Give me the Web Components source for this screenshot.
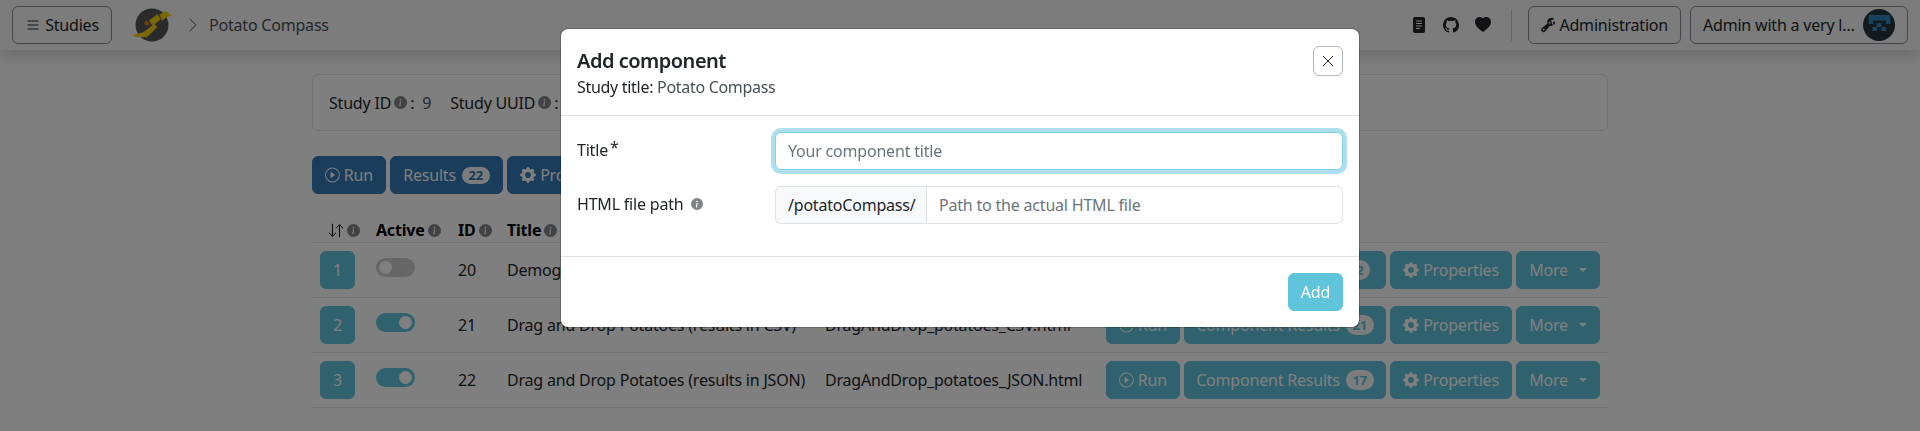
<!DOCTYPE html>
<html lang="en">
<head>
<meta charset="utf-8">
<title>Potato Compass</title>
<style>
  html, body { margin: 0; padding: 0; background: #fff; }
  body { font-family: "Noto Sans", "Open Sans", sans-serif; font-size: 16px; letter-spacing: -0.2px; color: #212529; height: 431px; overflow: hidden; }
</style>
</head>
<body>
<app-navbar></app-navbar>
<study-page></study-page>
<add-component-modal></add-component-modal>

<script>
const ICONS = {
  list: '<path d="M2.5 12a.5.5 0 0 1 .5-.5h10a.5.5 0 0 1 0 1H3a.5.5 0 0 1-.5-.5m0-4a.5.5 0 0 1 .5-.5h10a.5.5 0 0 1 0 1H3a.5.5 0 0 1-.5-.5m0-4a.5.5 0 0 1 .5-.5h10a.5.5 0 0 1 0 1H3a.5.5 0 0 1-.5-.5"/>',
  chevron: '<path d="M4.646 1.646a.5.5 0 0 1 .708 0l6 6a.5.5 0 0 1 0 .708l-6 6a.5.5 0 0 1-.708-.708L10.293 8 4.646 2.354a.5.5 0 0 1 0-.708"/>',
  info: '<path d="M8 16A8 8 0 1 0 8 0a8 8 0 0 0 0 16m.93-9.412-1 4.705c-.07.34.029.533.304.533.194 0 .487-.07.686-.246l-.088.416c-.287.346-.92.598-1.465.598-.703 0-1.002-.422-.808-1.319l.738-3.468c.064-.293.006-.399-.287-.47l-.451-.081.082-.381 2.29-.287zM8 5.5a1 1 0 1 1 0-2 1 1 0 0 1 0 2"/>',
  play: '<path d="M8 15A7 7 0 1 1 8 1a7 7 0 0 1 0 14m0 1A8 8 0 1 0 8 0a8 8 0 0 0 0 16"/><path d="M6.271 5.055a.5.5 0 0 1 .52.038l3.5 2.5a.5.5 0 0 1 0 .814l-3.5 2.5A.5.5 0 0 1 6 10.5v-5a.5.5 0 0 1 .271-.445"/>',
  gear: '<path d="M9.405 1.05c-.413-1.4-2.397-1.4-2.81 0l-.1.34a1.464 1.464 0 0 1-2.105.872l-.31-.17c-1.283-.698-2.686.705-1.987 1.987l.169.311c.446.82.023 1.841-.872 2.105l-.34.1c-1.4.413-1.4 2.397 0 2.81l.34.1a1.464 1.464 0 0 1 .872 2.105l-.17.31c-.698 1.283.705 2.686 1.987 1.987l.311-.169a1.464 1.464 0 0 1 2.105.872l.1.34c.413 1.4 2.397 1.4 2.81 0l.1-.34a1.464 1.464 0 0 1 2.105-.872l.31.17c1.283.698 2.686-.705 1.987-1.987l-.169-.311a1.464 1.464 0 0 1 .872-2.105l.34-.1c1.4-.413 1.4-2.397 0-2.81l-.34-.1a1.464 1.464 0 0 1-.872-2.105l.17-.31c.698-1.283-.705-2.686-1.987-1.987l-.311.169a1.464 1.464 0 0 1-2.105-.872zM8 10.93a2.929 2.929 0 1 1 0-5.86 2.929 2.929 0 0 1 0 5.858z"/>',
  github: '<path d="M8 0C3.58 0 0 3.58 0 8c0 3.54 2.29 6.53 5.47 7.59.4.07.55-.17.55-.38 0-.19-.01-.82-.01-1.49-2.01.37-2.53-.49-2.69-.94-.09-.23-.48-.94-.82-1.13-.28-.15-.68-.52-.01-.53.63-.01 1.08.58 1.23.82.72 1.21 1.87.87 2.33.66.07-.52.28-.87.51-1.07-1.78-.2-3.64-.89-3.64-3.95 0-.87.31-1.59.82-2.15-.08-.2-.36-1.02.08-2.12 0 0 .67-.21 2.2.82.64-.18 1.32-.27 2-.27s1.36.09 2 .27c1.53-1.04 2.2-.82 2.2-.82.44 1.1.16 1.92.08 2.12.51.56.82 1.27.82 2.15 0 3.07-1.87 3.75-3.65 3.95.29.25.54.73.54 1.48 0 1.07-.01 1.93-.01 2.2 0 .21.15.46.55.38A8.01 8.01 0 0 0 16 8c0-4.42-3.58-8-8-8"/>',
  heart: '<path fill-rule="evenodd" d="M8 1.314C12.438-3.248 23.534 4.735 8 15-7.534 4.736 3.562-3.248 8 1.314"/>',
  doc: '<path d="M4 0h8a2 2 0 0 1 2 2v12a2 2 0 0 1-2 2H4a2 2 0 0 1-2-2V2a2 2 0 0 1 2-2m1 3.5v1h6v-1zm0 2.5v1h6V6zm0 2.5v1h6v-1zm0 2.5v1h4v-1z" fill-rule="evenodd"/>',
  wrench: '<path d="M16 4.5a4.5 4.5 0 0 1-1.703 3.526L13 5l2.959-1.11q.04.3.041.61"/><path d="M11.5 9c.653 0 1.273-.139 1.833-.39L12 5.5 11 3l3.826-1.53A4.5 4.5 0 0 0 7.29 6.092l-6.116 5.096a2.583 2.583 0 1 0 3.638 3.638L9.908 8.71A4.5 4.5 0 0 0 11.5 9m-1.292-4.361-.596.893.809-.27a.25.25 0 0 1 .287.377l-.596.893.809-.27.158.475-1.5.5a.25.25 0 0 1-.287-.376l.596-.893-.809.27a.25.25 0 0 1-.287-.377l.596-.893-.809.27-.158-.475 1.5-.5a.25.25 0 0 1 .287.376M3 14a1 1 0 1 1 0-2 1 1 0 0 1 0 2"/>'
}

const icon = (name, size = 16) =>
  `<svg width="${size}" height="${size}" viewBox="0 0 16 16" fill="currentColor" aria-hidden="true">${ICONS[name]}</svg>`

const infoIcon = (size = 13) =>
  `<svg style="color:#808488;flex:none" width="${size}" height="${size}" viewBox="0 0 16 16" fill="currentColor" aria-hidden="true">${ICONS.info}</svg>`

class AppButton extends HTMLElement {
  constructor () {
    super()
    this.shadow = this.attachShadow({ mode: 'open' })
  }

  connectedCallback () {
    const variant = this.getAttribute('variant') || 'outline'
    const colors = {
      outline: 'background:transparent;color:#212529;border-color:#868e96',
      primary: 'background:#337ab7;color:#fff;border-color:#337ab7',
      info: 'background:#5fc4dc;color:#fff;border-color:#5fc4dc'
    }
    this.shadow.innerHTML = /* html */`
    <style>
      :host { display: inline-flex; flex: none; }
      .btn {
        display: inline-flex;
        align-items: center;
        gap: 4px;
        box-sizing: border-box;
        height: 38px;
        width: 100%;
        padding: 0 12px;
        border: 1px solid;
        border-radius: 6px;
        font-size: 16px;
        white-space: nowrap;
        justify-content: center;
        ${colors[variant]}
      }
    </style>
    <div class="btn"><slot></slot></div>
    `
  }
}

class CountBadge extends HTMLElement {
  constructor () {
    super()
    this.attachShadow({ mode: 'open' }).innerHTML = /* html */`
    <style>
      :host {
        display: inline-block;
        margin-left: 2px;
        padding: 1px 6.5px;
        border-radius: 10px;
        background: #f8f9fa;
        color: #337ab7;
        font-size: 13px;
        font-weight: 700;
        line-height: 15px;
        letter-spacing: 0;
      }
      :host([tone="info"]) { color: #5fc4dc; padding: 2px 6.5px; line-height: 16px; }
    </style>
    <slot></slot>
    `
  }
}

class AppNavbar extends HTMLElement {
  constructor () {
    super()
    this.shadow = this.attachShadow({ mode: 'open' })
  }

  connectedCallback () {
    this.shadow.innerHTML = /* html */`
    <style>
      :host {
        display: flex;
        align-items: center;
        box-sizing: border-box;
        height: 50px;
        padding: 0 12px;
        background: #f8f9fa;
        box-shadow: 0 8px 16px rgba(0, 0, 0, .15);
        position: relative;
      }
      .logo { margin-left: 20px; flex: none; }
      .sep { margin: 0 8px 0 12px; color: #6c757d; display: flex; }
      .crumb { color: #495057; }
      .right { margin-left: auto; display: flex; align-items: center; }
      .links { display: flex; gap: 16px; color: #212529; }
      .divider { width: 1px; height: 32px; background: #c9ccd0; margin: 0 16px 0 20px; }
      app-button + app-button { margin-left: 9px; }
      .user { display: flex; align-items: center; width: 192px; gap: 7px; }
      .name { width: 153px; white-space: nowrap; }
      .avatar { flex: none; }
    </style>
    <app-button style="width:100px">${icon('list')}<span>Studies</span></app-button>
    <svg class="logo" width="41" height="36" viewBox="0 0 41 36" aria-hidden="true">
      <circle cx="20" cy="18" r="16.5" fill="#555"/>
      <path d="M1.3 27.7l10-2.4 11-8.3 3 3.3-10.6 10-12.4-.6z" fill="#f5d010"/>
      <path d="M17 13.7l8.3-6.7 3.4 5.3-8 6.7z" fill="#f5d010"/>
      <path d="M27.3 7.7l6.4-3.7 6.6 4.7-5.6 1.6-4.7 3.4z" fill="#f5d010"/>
      <circle cx="14.7" cy="16.3" r="2.2" fill="#e87b17"/>
    </svg>
    <span class="sep">${icon('chevron')}</span>
    <span class="crumb">Potato Compass</span>
    <div class="right">
      <div class="links">${icon('doc')}${icon('github')}${icon('heart')}</div>
      <div class="divider"></div>
      <app-button style="width:153px">${icon('wrench')}<span>Administration</span></app-button>
      <app-button style="width:218px">
        <span class="user">
          <span class="name">Admin with a very l…</span>
          <svg class="avatar" width="32" height="32" viewBox="0 0 32 32" aria-hidden="true">
            <circle cx="16" cy="16" r="16" fill="#243440"/>
            <path d="M5.7 6h21.7v9h-4.4v-3.5H10V15H5.7z M13.4 14h5v4h-5z M9.4 18H14v4H9.4z M18.4 18H23v4h-4.6z" fill="#2f86bd"/>
          </svg>
        </span>
      </app-button>
    </div>
    `
  }
}

class ToggleSwitch extends HTMLElement {
  constructor () {
    super()
    this.attachShadow({ mode: 'open' }).innerHTML = /* html */`
    <style>
      :host {
        display: block;
        position: relative;
        box-sizing: border-box;
        width: 39px;
        height: 19px;
        border-radius: 10px;
        background: #cccccc;
      }
      :host([on]) { background: #5fc4dc; }
      .knob {
        position: absolute;
        top: 3px;
        left: 3px;
        width: 13px;
        height: 13px;
        border-radius: 50%;
        background: #fff;
      }
      :host([on]) .knob { left: 23px; }
    </style>
    <div class="knob"></div>
    `
  }
}

const TABLE_COLUMNS = '56px 82px 49px 318px 281px 1fr'

class ComponentRow extends HTMLElement {
  constructor () {
    super()
    this.shadow = this.attachShadow({ mode: 'open' })
  }

  connectedCallback () {
    const pos = this.getAttribute('pos')
    const id = this.getAttribute('component-id')
    const name = this.getAttribute('name')
    const file = this.getAttribute('file')
    const results = this.getAttribute('results')
    const on = this.hasAttribute('active') ? 'on' : ''
    this.shadow.innerHTML = /* html */`
    <style>
      :host {
        display: grid;
        grid-template-columns: ${TABLE_COLUMNS};
        box-sizing: border-box;
        height: 55px;
        align-items: center;
        border-bottom: 1px solid #dee2e6;
      }
      .cell { padding: 0 8px; white-space: nowrap; }
      .toggle { align-self: start; padding-top: 15px; }
      .actions { display: flex; gap: 4px; }
      .caret {
        width: 0;
        height: 0;
        margin-left: 7px;
        border-top: 4px solid currentColor;
        border-left: 4px solid transparent;
        border-right: 4px solid transparent;
      }
    </style>
    <div class="cell"><app-button variant="info" style="width:35px">${pos}</app-button></div>
    <div class="cell toggle"><toggle-switch ${on}></toggle-switch></div>
    <div class="cell">${id}</div>
    <div class="cell">${name}</div>
    <div class="cell">${file}</div>
    <div class="cell actions">
      <app-button variant="info" style="width:74px">${icon('play')}<span>Run</span></app-button>
      <app-button variant="info" style="width:202px"><span>Component Results</span><count-badge tone="info">${results}</count-badge></app-button>
      <app-button variant="info" style="width:122px">${icon('gear')}<span>Properties</span></app-button>
      <app-button variant="info" style="width:84px"><span>More</span><span class="caret"></span></app-button>
    </div>
    `
  }
}

class StudyPage extends HTMLElement {
  constructor () {
    super()
    this.shadow = this.attachShadow({ mode: 'open' })
  }

  connectedCallback () {
    this.shadow.innerHTML = /* html */`
    <style>
      :host { display: block; width: 1296px; margin: 24px auto 0; }
      .card {
        display: flex;
        align-items: center;
        gap: 19px;
        box-sizing: border-box;
        height: 57px;
        padding: 0 16px;
        border: 1px solid #dee2e6;
        border-radius: 6px;
      }
      .field { display: flex; align-items: center; gap: 3px; }
      .value { margin-left: 5px; color: #495057; }
      .toolbar { display: flex; gap: 4px; margin-top: 25px; }
      .head {
        display: grid;
        grid-template-columns: ${TABLE_COLUMNS};
        align-items: center;
        box-sizing: border-box;
        height: 49px;
        padding-top: 24px;
        border-bottom: 1px solid #dee2e6;
        font-weight: 700;
        color: #000;
      }
      .th { display: flex; align-items: center; gap: 3px; padding: 0 8px; }
      .th.sort { padding-left: 16px; }
    </style>
    <div class="card">
      <div class="field">Study ID ${infoIcon()}: <span class="value">9</span></div>
      <div class="field">Study UUID ${infoIcon()}:</div>
    </div>
    <div class="toolbar">
      <app-button variant="primary" style="width:74px">${icon('play')}<span>Run</span></app-button>
      <app-button variant="primary" style="width:113px"><span>Results</span><count-badge>22</count-badge></app-button>
      <app-button variant="primary" style="width:122px">${icon('gear')}<span>Properties</span></app-button>
    </div>
    <div class="head">
      <div class="th sort">
        <svg width="18" height="15" viewBox="0 0 18 15" fill="none" stroke="#000" stroke-width="1.1" aria-hidden="true">
          <path d="M5 0v14M1 10l4 4 4-4M13 15V1M9 5l4-4 4 4"/>
        </svg>
        ${infoIcon()}
      </div>
      <div class="th">Active ${infoIcon()}</div>
      <div class="th">ID ${infoIcon()}</div>
      <div class="th">Title ${infoIcon()}</div>
      <div class="th">HTML file</div>
      <div class="th"></div>
    </div>
    <component-row pos="1" component-id="20" name="Demographics" file="Demographics.html" results="2"></component-row>
    <component-row pos="2" component-id="21" active name="Drag and Drop Potatoes (results in CSV)" file="DragAndDrop_potatoes_CSV.html" results="21"></component-row>
    <component-row pos="3" component-id="22" active name="Drag and Drop Potatoes (results in JSON)" file="DragAndDrop_potatoes_JSON.html" results="17"></component-row>
    `
  }
}

class AddComponentModal extends HTMLElement {
  constructor () {
    super()
    this.shadow = this.attachShadow({ mode: 'open' })
  }

  connectedCallback () {
    this.shadow.innerHTML = /* html */`
    <style>
      :host {
        position: fixed;
        inset: 0;
        display: flex;
        justify-content: center;
        align-items: flex-start;
        background: rgba(0, 0, 0, .5);
      }
      .dialog {
        box-sizing: border-box;
        width: 800px;
        margin-top: 28px;
        background: #fff;
        border: 1px solid rgba(0, 0, 0, .2);
        border-radius: 8px;
        background-clip: padding-box;
      }
      header {
        display: flex;
        justify-content: space-between;
        align-items: flex-start;
        box-sizing: border-box;
        height: 87px;
        padding: 17px 16px 16px;
        border-bottom: 1px solid #dee2e6;
      }
      h5 { margin: 0; font-size: 20px; font-weight: 600; letter-spacing: -0.5px; line-height: 29px; color: #212529; }
      .subtitle { line-height: 24px; color: #495057; letter-spacing: -0.3px; }
      .subtitle b { font-weight: 400; color: #212529; }
      .close {
        display: flex;
        align-items: center;
        justify-content: center;
        box-sizing: border-box;
        width: 30px;
        height: 30px;
        border: 1px solid #adb5bd;
        border-radius: 6px;
      }
      .body { padding: 16px 16px 32px; display: flex; flex-direction: column; gap: 16px; border-bottom: 1px solid #dee2e6; }
      .row { display: grid; grid-template-columns: 198px 568px; align-items: center; height: 38px; }
      .label { display: flex; align-items: center; gap: 8px; margin-top: -2px; }
      sup { font-size: 16px; line-height: 0; position: relative; top: -3px; margin-left: -6px; }
      input {
        box-sizing: border-box;
        width: 100%;
        height: 38px;
        padding: 0 12px;
        font: inherit;
        letter-spacing: inherit;
        border: 1px solid #dee2e6;
        border-radius: 6px;
        outline: none;
        color: #212529;
        background: #fff;
      }
      input::placeholder { color: #6c757d; opacity: 1; }
      input.focus { border-color: #85cfe8; box-shadow: 0 0 0 4px rgba(91, 192, 222, .5); }
      .group { display: flex; }
      .prefix {
        display: flex;
        align-items: center;
        flex: none;
        box-sizing: border-box;
        width: 151px;
        height: 38px;
        padding: 0 12px;
        background: #f8f9fa;
        border: 1px solid #dee2e6;
        border-right: 0;
        border-radius: 6px 0 0 6px;
      }
      .group input { border-radius: 0 6px 6px 0; }
      footer { display: flex; justify-content: flex-end; padding: 16px; }
    </style>
    <div class="dialog" role="dialog" aria-label="Add component">
      <header>
        <div>
          <h5>Add component</h5>
          <div class="subtitle"><b>Study title:</b> Potato Compass</div>
        </div>
        <div class="close">
          <svg width="12" height="12" viewBox="0 0 12 12" fill="none" stroke="#212529" stroke-width="1" aria-hidden="true"><path d="M1 1l10 10M11 1L1 11"/></svg>
        </div>
      </header>
      <div class="body">
        <div class="row">
          <div class="label"><span>Title</span><sup>*</sup></div>
          <input class="focus" type="text" placeholder="Your component title">
        </div>
        <div class="row">
          <div class="label"><span>HTML file path</span>${infoIcon(12)}</div>
          <div class="group">
            <div class="prefix">/potatoCompass/</div>
            <input type="text" placeholder="Path to the actual HTML file">
          </div>
        </div>
      </div>
      <footer><app-button variant="info" style="width:55px">Add</app-button></footer>
    </div>
    `
  }
}

customElements.define('app-button', AppButton)
customElements.define('count-badge', CountBadge)
customElements.define('app-navbar', AppNavbar)
customElements.define('toggle-switch', ToggleSwitch)
customElements.define('component-row', ComponentRow)
customElements.define('study-page', StudyPage)
customElements.define('add-component-modal', AddComponentModal)
</script>
</body>
</html>
